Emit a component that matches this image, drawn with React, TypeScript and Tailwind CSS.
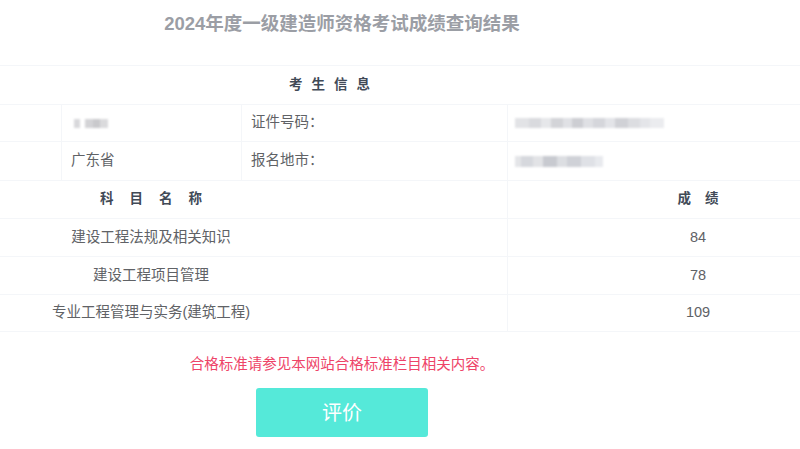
import React from "react";

const font = { fontFamily: '"Liberation Sans", "Noto Sans CJK SC", sans-serif' };

function Blur({ shades, h = 9 }: { shades: [number, string][]; h?: number }) {
  return (
    <div className="flex items-center blur-[1px]">
      {shades.map(([w, c], i) => (
        <div key={i} style={{ width: w, height: h, background: c }} />
      ))}
    </div>
  );
}

export default function App() {
  const line = "border-[#f4f6f9]";
  const subjects: [string, string][] = [
    ["建设工程法规及相关知识", "84"],
    ["建设工程项目管理", "78"],
    ["专业工程管理与实务(建筑工程)", "109"],
  ];
  return (
    <div className="w-[800px] h-[449px] bg-white overflow-hidden text-[14.5px] text-[#606266]" style={font}>
      <div className="w-[684px] h-[65px] pt-[11px] text-center text-[18.5px] font-bold text-[#9b9ea5] leading-[26px]">
        2024年度一级建造师资格考试成绩查询结果
      </div>
      <div className={`h-[39px] border-t ${line} w-full`}>
        <div className="w-[684px] h-full flex items-center justify-center pr-[16px] text-[13.5px] font-bold text-[#414a57] tracking-[9px]">
          考生信息
        </div>
      </div>
      <div className={`grid grid-cols-[61px_180px_266px_1fr] h-[37px] border-t ${line}`}>
        <div />
        <div className={`border-l ${line} flex items-center pl-[12px]`}>
          <Blur shades={[[6, "#d8d8db"], [5, "#fff"], [8, "#d3d3d6"], [7, "#c9c9cc"], [8, "#dadadc"]]} />
        </div>
        <div className={`border-l ${line} flex items-center pl-[9px]`}>证件号码：</div>
        <div className={`border-l ${line} flex items-center pl-[7px]`}>
          <Blur
            h={10}
            shades={[
              [14, "#e2e3e6"],
              [12, "#d9dade"],
              [10, "#e6e7ea"],
              [12, "#d3d4d8"],
              [9, "#e0e1e5"],
              [11, "#cdced3"],
              [10, "#dfe0e4"],
              [12, "#d5d6db"],
              [10, "#e3e4e8"],
              [13, "#d0d1d6"],
              [12, "#dcdde1"],
              [10, "#e4e5e9"],
              [14, "#ebecef"],
            ]}
          />
        </div>
      </div>
      <div className={`grid grid-cols-[61px_180px_266px_1fr] h-[39px] border-t ${line}`}>
        <div />
        <div className={`border-l ${line} flex items-center pl-[9px]`}>广东省</div>
        <div className={`border-l ${line} flex items-center pl-[9px]`}>报名地市：</div>
        <div className={`border-l ${line} flex items-center pl-[7px]`}>
          <Blur
            h={11}
            shades={[
              [6, "#e4e5e8"],
              [12, "#d6d8dd"],
              [10, "#e2e3e6"],
              [14, "#c8cad0"],
              [10, "#dcdee2"],
              [14, "#cfd1d7"],
              [14, "#dfe1e6"],
              [8, "#e8eaee"],
            ]}
          />
        </div>
      </div>
      <div className={`grid grid-cols-[507px_1fr] h-[38px] border-t ${line} font-bold text-[13.5px] text-[#414a57]`}>
        <div className="flex items-center">
          <div className="w-[302px] text-center pl-[16px] tracking-[16px]">科目名称</div>
        </div>
        <div className={`border-l ${line} flex items-center pl-[88px]`}>
          <div className="flex-1 text-center pl-[14px] tracking-[14px]">成绩</div>
        </div>
      </div>
      {subjects.map(([name, score], i) => (
        <div
          key={i}
          className={`grid grid-cols-[507px_1fr] h-[38px] border-t ${line} ${i === subjects.length - 1 ? `border-b` : ""}`}
        >
          <div className="flex items-center">
            <div className="w-[302px] text-center">{name}</div>
          </div>
          <div className={`border-l ${line} flex items-center pl-[88px]`}>
            <div className="flex-1 text-center">{score}</div>
          </div>
        </div>
      ))}
      <div className="w-[684px] mt-[22px] text-center text-[14.5px] text-[#ee4468] leading-[20px]">
        合格标准请参见本网站合格标准栏目相关内容。
      </div>
      <div className="w-[684px] flex justify-center mt-[14px]">
        <div className="w-[172px] h-[49px] rounded-[3px] bg-[#55e9d9] text-white text-[20px] flex items-center justify-center">
          评价
        </div>
      </div>
    </div>
  );
}
